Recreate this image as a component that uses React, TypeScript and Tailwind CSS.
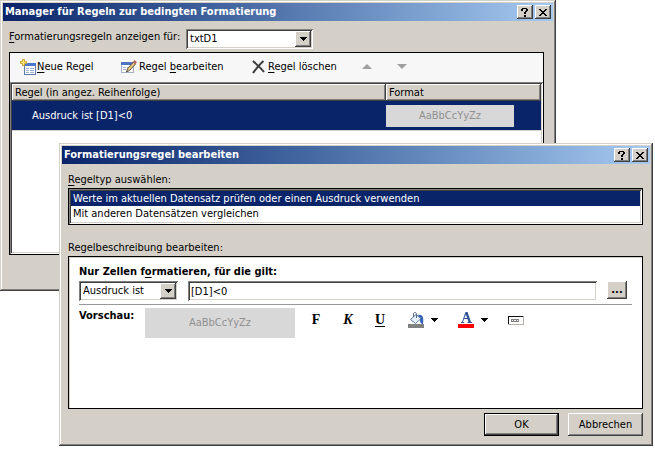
import type { ReactNode } from "react";

const raised =
  "bg-[#d4d0c8] shadow-[inset_-1px_-1px_#404040,inset_1px_1px_#ffffff,inset_-2px_-2px_#808080]";
const sunken =
  "bg-white shadow-[inset_1px_1px_#808080,inset_-1px_-1px_#ffffff,inset_2px_2px_#404040,inset_-2px_-2px_#d4d0c8]";

const ruleTypes = [
  "Werte im aktuellen Datensatz prüfen oder einen Ausdruck verwenden",
  "Mit anderen Datensätzen vergleichen",
];

function Key({ children }: { children: ReactNode }) {
  return <span className="underline underline-offset-2">{children}</span>;
}

function Window({
  title,
  className,
  children,
}: {
  title: string;
  className: string;
  children: ReactNode;
}) {
  return (
    <section
      aria-label={title}
      className={`[grid-area:1/1] self-start bg-[#d4d0c8] p-[3px] shadow-[inset_-1px_-1px_#404040,inset_1px_1px_#d4d0c8,inset_-2px_-2px_#808080,inset_2px_2px_#ffffff] ${className}`}
    >
      <header className="flex h-[18px] items-center gap-[2px] bg-linear-to-r from-[#0a246a] to-[#a6caf0] px-[2px]">
        <h2 className="flex-1 truncate font-bold text-white">{title}</h2>
        <button type="button" aria-label="Hilfe" className={`flex h-[14px] w-4 items-center justify-center ${raised}`}>
          <svg width="8" height="9" viewBox="0 0 8 9" shapeRendering="crispEdges">
            <path d="M1 0h5v1H1zM0 1h2v2H0zM5 1h2v2H5zM4 3h2v1H4zM3 4h2v2H3zM3 7h2v2H3z" />
          </svg>
        </button>
        <button type="button" aria-label="Schließen" className={`flex h-[14px] w-4 items-center justify-center ${raised}`}>
          <svg width="8" height="7" viewBox="0 0 8 7" shapeRendering="crispEdges">
            <path d="M0 0h2v1H0zM6 0h2v1H6zM1 1h2v1H1zM5 1h2v1H5zM2 2h4v1H2zM3 3h2v1H3zM2 4h4v1H2zM1 5h2v1H1zM5 5h2v1H5zM0 6h2v1H0zM6 6h2v1H6z" />
          </svg>
        </button>
      </header>
      {children}
    </section>
  );
}

function Arrow() {
  return (
    <svg width="7" height="4" viewBox="0 0 7 4" shapeRendering="crispEdges">
      <path d="M0 0h7v1H0zM1 1h5v1H1zM2 2h3v1H2zM3 3h1v1H3z" />
    </svg>
  );
}

function Dropdown({ id, label, value, className }: { id: string; label?: string; value: string; className: string }) {
  return (
    <div className={`grid h-5 ${sunken} ${className}`}>
      <select
        id={id}
        aria-label={label}
        className="[grid-area:1/1] w-full appearance-none bg-transparent pr-5 pl-1 outline-none"
      >
        <option>{value}</option>
      </select>
      <span
        className={`pointer-events-none [grid-area:1/1] m-[2px] flex w-4 items-center justify-center justify-self-end ${raised}`}
      >
        <Arrow />
      </span>
    </div>
  );
}

function NewIcon() {
  return (
    <svg width="16" height="16" viewBox="0 0 16 16">
      <rect x="4.5" y="4.5" width="11" height="11" fill="#fff" stroke="#5c7cb4" />
      <path d="M5 4h11v3H5z" fill="#4a78cc" />
      <path d="M6 9.500h3M10 9.500h4M6 11.500h3M10 11.500h4M6 13.500h3M10 13.500h4" stroke="#9db4d8" />
      <path d="M2.500 .5h2v2h2v2h-2v2h-2v-2h-2v-2h2z" fill="#ffe97a" stroke="#d0a430" />
    </svg>
  );
}

function EditIcon() {
  return (
    <svg width="16" height="16" viewBox="0 0 16 16">
      <rect x=".5" y="3.500" width="12" height="10" fill="#fff" stroke="#a3b0ca" />
      <path d="M0 3h13v3H0z" fill="#4f74c4" />
      <path d="M2 8.500h3M6 8.500h3M2 10.500h3M6 10.500h2" stroke="#9db4d8" />
      <path d="M5.500 13l1-3.500 6-6.500 2 2-6 6.500z" fill="#e8c47a" stroke="#5a5448" />
      <path d="M12 3l1.500-2L16 3l-1.500 2z" fill="#b9685a" />
    </svg>
  );
}

function DeleteIcon() {
  return (
    <svg width="13" height="14" viewBox="0 0 13 14" fill="none" stroke="#3c3c3c" strokeWidth="2">
      <path d="M1 1c3 3 7 6 11 11" />
      <path d="M11.500 1C8 4 4 9 1 13" />
    </svg>
  );
}

function FillIcon() {
  return (
    <svg width="16" height="16" viewBox="0 0 16 16">
      <path d="M10 3c5-1 6 3 5 9-3 0-3-3-3-5z" fill="#3566b8" />
      <path d="M2.500 7.500L8 2.500l5 4-5.500 5z" fill="#e9f0fa" stroke="#5878a8" />
      <path d="M5.500 5V2c0-2 3-2 3 0v4" fill="none" stroke="#5a6a80" />
      <path d="M0 12h16v4H0z" fill="#808080" />
    </svg>
  );
}

function FontColorIcon() {
  return (
    <svg width="16" height="16" viewBox="0 0 16 16">
      <path
        d="M7.500 0h2l3.500 10H14v1H9.500v-1h1l-1-3H6l-1 3h1v1H3v-1h1zM7.900 2.500L6.400 6h2.700z"
        fill="#2e5596"
      />
      <path d="M0 12h16v4H0z" fill="#f00" />
    </svg>
  );
}

function EnabledIcon() {
  return (
    <svg width="16" height="9" viewBox="0 0 16 9" shapeRendering="crispEdges">
      <path d="M0 0h16v9H0z" fill="#b4b0a8" />
      <path d="M1 1h14v7H1z" fill="#fff" />
      <path d="M0 0h15v1H0zM0 0h1v8H0z" fill="#111" />
      <path d="M3 3h8v1H3zM3 5h8v1H3zM3 4h1v1H3zM5 4h1v1H5zM8 4h1v1H8zM10 4h1v1h-1z" fill="#808080" />
    </svg>
  );
}

function RuleManager() {
  return (
    <Window title="Manager für Regeln zur bedingten Formatierung" className="mr-[99px]">
      <div className="pt-2 pr-[9px] pb-[33px] pl-[6px]">
        <div className="flex items-start">
          <label htmlFor="source" className="w-[177px] whitespace-nowrap">
            <Key>F</Key>ormatierungsregeln anzeigen für:
          </label>
          <Dropdown id="source" value="txtD1" className="w-[127px]" />
        </div>
        <div className="mt-[3px] border border-black bg-[#f7f7f7]">
          <div className="flex h-[29px] items-center pb-[2px] pl-[10px]">
            <button type="button" className="flex w-[101px] items-center gap-px whitespace-nowrap">
              <NewIcon />
              <span><Key>N</Key>eue Regel</span>
            </button>
            <button type="button" className="flex w-[131px] items-center gap-[2px] whitespace-nowrap">
              <EditIcon />
              <span>Regel <Key>b</Key>earbeiten</span>
            </button>
            <button type="button" className="flex w-[110px] items-center gap-[3px] whitespace-nowrap">
              <DeleteIcon />
              <span><Key>R</Key>egel löschen</span>
            </button>
            <button type="button" aria-label="Nach oben" className="w-[35px]">
              <svg width="10" height="5" viewBox="0 0 10 5"><path d="M5 0l5 5H0z" fill="#a0a0a0" /></svg>
            </button>
            <button type="button" aria-label="Nach unten">
              <svg width="10" height="5" viewBox="0 0 10 5"><path d="M0 0h10L5 5z" fill="#a0a0a0" /></svg>
            </button>
          </div>
          <div className={`min-h-[172px] p-[2px] ${sunken}`}>
            <table className="w-full table-fixed border-separate border-spacing-0 text-left">
              <thead>
                <tr className="h-[17px]">
                  <th className={`p-0 pl-[3px] font-normal ${raised}`}>Regel (in angez. Reihenfolge)</th>
                  <th className={`w-[155px] p-0 pl-[3px] font-normal ${raised}`}>Format</th>
                </tr>
              </thead>
              <tbody>
                <tr className="h-[30px] bg-[#0a246a] text-white">
                  <td className="border-b border-[#d4d0c8] p-0 pl-5">Ausdruck ist [D1]&lt;0</td>
                  <td className="border-b border-[#d4d0c8] p-0">
                    <div className="flex h-[22px] w-32 items-center justify-center bg-[#d8d8d8] text-[#909090]">
                      AaBbCcYyZz
                    </div>
                  </td>
                </tr>
              </tbody>
            </table>
          </div>
        </div>
      </div>
    </Window>
  );
}

function RuleEditor() {
  return (
    <Window title="Formatierungsregel bearbeiten" className="mt-[143px] mr-[2px] ml-[59px]">
      <form className="pt-2 pr-[7px] pb-[7px] pl-[6px]">
        <div id="rule-type"><Key>R</Key>egeltyp auswählen:</div>
        <div className="border border-black bg-white">
          <ul role="listbox" aria-labelledby="rule-type" className={`m-0 p-[2px] pb-[3px] ${sunken}`}>
            {ruleTypes.map((type, i) => (
              <li
                key={type}
                role="option"
                aria-selected={i === 0}
                className={`truncate px-[2px] leading-[15px] ${i === 0 ? "bg-[#0a246a] text-white" : ""}`}
              >
                {type}
              </li>
            ))}
          </ul>
        </div>

        <h3 className="mt-[15px]">Regelbeschreibung bearbeiten:</h3>
        <div className="min-h-[153px] border border-black bg-white px-[10px] pt-[7px] shadow-[inset_1px_1px_#d4d0c8]">
          <div className="pb-[1px] font-bold">
            Nur Zellen f<Key>o</Key>rmatieren, für die gilt:
          </div>
          <div className="flex gap-[10px] border-b border-[#999999] pr-[5px] pb-[3px]">
            <Dropdown id="condition" label="Bedingung" value="Ausdruck ist" className="w-[99px]" />
            <input
              aria-label="Ausdruck"
              defaultValue="[D1]<0"
              className={`h-5 min-w-0 flex-1 px-[3px] outline-none ${sunken}`}
            />
            <button type="button" aria-label="Ausdrucks-Generator" className={`h-[18px] w-5 font-bold ${raised}`}>
              ...
            </button>
          </div>
          <div className="flex items-start pt-[3px]">
            <span className="w-[66px] font-bold">Vorschau:</span>
            <div className="mr-[5px] flex h-[30px] w-[150px] items-center justify-center bg-[#d8d8d8] text-[#909090]">
              AaBbCcYyZz
            </div>
            <div className="flex h-6 items-center font-['Liberation_Serif',serif] text-sm font-bold">
              <button type="button" className="w-8">F</button>
              <button type="button" className="w-8 italic">K</button>
              <button type="button" className="mr-3 w-8 underline underline-offset-2">U</button>
              <button type="button" aria-label="Hintergrundfarbe" className="mr-5 flex items-center gap-[7px]">
                <FillIcon />
                <Arrow />
              </button>
              <button type="button" aria-label="Schriftfarbe" className="mr-5 flex items-center gap-[7px]">
                <FontColorIcon />
                <Arrow />
              </button>
              <button type="button" aria-label="Aktiviert">
                <EnabledIcon />
              </button>
            </div>
          </div>
        </div>

        <div className="mt-1 flex justify-end gap-[9px]">
          <button
            type="button"
            className="h-[23px] w-[75px] border border-black bg-[#d4d0c8] shadow-[inset_-1px_-1px_#404040,inset_1px_1px_#ffffff,inset_-2px_-2px_#808080]"
          >
            OK
          </button>
          <button type="button" className={`h-[23px] w-[75px] ${raised}`}>Abbrechen</button>
        </div>
      </form>
    </Window>
  );
}

export default function App() {
  return (
    <main className="grid min-h-screen content-start bg-white font-['DejaVu_Sans_Condensed','DejaVu_Sans',sans-serif] text-[11px] leading-4 text-black">
      <RuleManager />
      <RuleEditor />
    </main>
  );
}
